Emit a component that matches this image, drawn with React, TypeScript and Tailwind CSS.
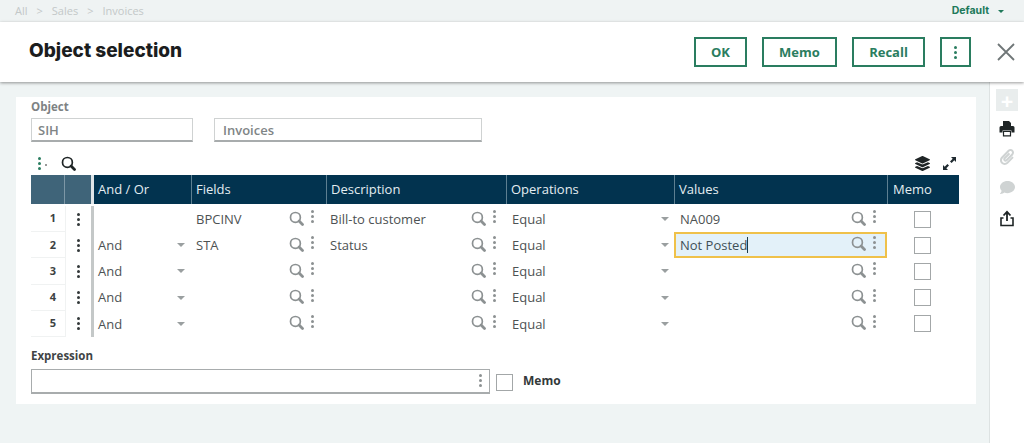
import React from "react";
import { FaPaperclip, FaComment, FaLayerGroup } from "react-icons/fa";

const rows = [
  { n: 1, andOr: "", field: "BPCINV", desc: "Bill-to customer", value: "NA009" },
  { n: 2, andOr: "And", field: "STA", desc: "Status", value: "Not Posted", active: true },
  { n: 3, andOr: "And", field: "", desc: "", value: "" },
  { n: 4, andOr: "And", field: "", desc: "", value: "" },
  { n: 5, andOr: "And", field: "", desc: "", value: "" },
];

function Magnifier({ className = "text-[#8c9192]" }: { className?: string }) {
  return (
    <svg width="15" height="15" viewBox="0 0 14 14" fill="none" className={className}>
      <circle cx="6" cy="6" r="4.6" stroke="currentColor" strokeWidth="1.6" />
      <path d="M9.4 9.4 L12.6 12.6" stroke="currentColor" strokeWidth="2.6" strokeLinecap="round" />
    </svg>
  );
}

function Dots({ className = "bg-[#8c9192]", size = "h-[3px] w-[3px]" }: { className?: string; size?: string }) {
  return (
    <div className="flex flex-col gap-[2px]">
      <span className={`${size} rounded-full ${className}`}></span>
      <span className={`${size} rounded-full ${className}`}></span>
      <span className={`${size} rounded-full ${className}`}></span>
    </div>
  );
}

function Caret() {
  return <span className="h-0 w-0 border-x-[4px] border-t-[4px] border-x-transparent border-t-[#9a9fa0]"></span>;
}

function LookupIcons() {
  return (
    <div className="-mt-[2px] flex items-center gap-[7px]">
      <Magnifier />
      <div className="-mt-[3px]">
        <Dots />
      </div>
    </div>
  );
}

function HeaderCell({ label, width }: { label: string; width: string }) {
  return (
    <div className={`${width} flex h-full items-center border-r border-[#5d7f91] pl-[4px] text-[13px] text-[#e4edf1]`}>
      {label}
    </div>
  );
}

function ActionButton({ label, width }: { label: string; width: string }) {
  return (
    <button className={`${width} flex h-[30px] items-center justify-center border-2 border-[#2a7d60] pt-[1px] text-[13px] font-bold text-[#2a7d60]`}>
      {label}
    </button>
  );
}

function Row({ row }: { row: (typeof rows)[number] }) {
  return (
    <div className="flex h-[26.2px] items-center text-[13px] text-[#4d5253]">
      <div className="flex h-full w-[34px] items-center justify-end border-b border-[#f0f2f2] pr-[9px] text-[11px] font-bold text-[#3c4142]">
        {row.n}
      </div>
      <div className="flex h-full w-[26px] items-center justify-center border-l border-[#f0f2f2]">
        <Dots className="bg-[#33393a]" />
      </div>
      <div className="h-full w-[3px] bg-[#c4c8c8]"></div>
      <div className="flex h-full w-[98px] items-center justify-between pl-[4px] pr-[7px]">
        <span className="mt-[1px]">{row.andOr}</span>
        {row.andOr && <Caret />}
      </div>
      <div className="flex h-full w-[135px] items-center justify-between pl-[4px] pr-[13px]">
        <span className="mt-[1px]">{row.field}</span>
        <LookupIcons />
      </div>
      <div className="flex h-full w-[180px] items-center justify-between pl-[3px] pr-[11px]">
        <span className="mt-[1px]">{row.desc}</span>
        <LookupIcons />
      </div>
      <div className="flex h-full w-[168px] items-center justify-between pl-[5px] pr-[6px]">
        <span className="mt-[1px]">Equal</span>
        <Caret />
      </div>
      {row.active ? (
        <div className="-ml-[1px] -mt-[1px] flex h-[26px] w-[213px] items-center justify-between border-2 border-[#efc14a] bg-[#e3f1f9] pl-[4px] pr-[9px] text-[#3f5058]">
          <span className="mt-[1px] border-r border-[#1d3a4a] leading-[16px]">{row.value}</span>
          <LookupIcons />
        </div>
      ) : (
        <div className="flex h-full w-[212px] items-center justify-between pl-[5px] pr-[11px]">
          <span className="mt-[1px]">{row.value}</span>
          <LookupIcons />
        </div>
      )}
      <div className="flex h-full w-[71px] items-center justify-center">
        <span className="h-[17px] w-[17px] border border-[#a3a7a8] bg-white"></span>
      </div>
    </div>
  );
}

export default function App() {
  return (
    <div className="flex h-[443px] w-[1024px] flex-col overflow-hidden bg-[#eff4f4] font-['Open_Sans',sans-serif]">
      <div className="flex h-[22px] items-center justify-between bg-[#eff3f3] pl-[15px] pr-[20px] text-[11px]">
        <div className="flex items-center gap-[9px] text-[#c3c8c8]">
          <span>All</span>
          <span>&gt;</span>
          <span>Sales</span>
          <span>&gt;</span>
          <span>Invoices</span>
        </div>
        <div className="flex items-center gap-[9px]">
          <span className="font-['Inter',sans-serif] text-[10.5px] font-bold text-[#20795a]">Default</span>
          <span className="h-0 w-0 border-x-[3px] border-t-[3px] border-x-transparent border-t-[#20795a]"></span>
        </div>
      </div>

      <div className="z-10 flex h-[60px] items-center justify-between bg-white pl-[29px] pr-[8px] shadow-[0_1px_3px_rgba(0,0,0,0.4)]">
        <h1 className="-mt-[2px] font-['Inter',sans-serif] text-[19px] font-extrabold text-[#1b1d1e]">Object selection</h1>
        <div className="flex items-center">
          <ActionButton label="OK" width="w-[53px]" />
          <div className="w-[15px]"></div>
          <ActionButton label="Memo" width="w-[75px]" />
          <div className="w-[15px]"></div>
          <ActionButton label="Recall" width="w-[73px]" />
          <div className="w-[15px]"></div>
          <button className="flex h-[30px] w-[31px] items-center justify-center border-2 border-[#2a7d60]">
            <Dots className="bg-[#2a7d60]" />
          </button>
          <svg width="20" height="20" viewBox="0 0 20 20" className="ml-[25px] text-[#6f7677]">
            <path d="M2 2 L18 18 M18 2 L2 18" stroke="currentColor" strokeWidth="1.8" />
          </svg>
        </div>
      </div>

      <div className="flex flex-1">
        <div className="flex-1 pl-[16px] pr-[13px] pt-[15px]">
          <div className="flex h-[307px] flex-col bg-white pl-[15px] pt-[1px]">
            <label className="h-[20px] text-[11.5px] font-bold text-[#7d8283]">Object</label>
            <div className="flex gap-[21px]">
              <div className="flex h-[24px] w-[162px] items-center border border-b-2 border-[#cfd2d2] border-b-[#a8acad] pl-[6px] pt-[2px] text-[13px] font-semibold text-[#808586]">
                SIH
              </div>
              <div className="flex h-[24px] w-[268px] items-center border border-b-2 border-[#cfd2d2] border-b-[#a8acad] pl-[8px] pt-[2px] text-[13px] font-semibold text-[#808586]">
                Invoices
              </div>
            </div>
            <div className="flex h-[33px] w-[928px] items-center justify-between pl-[7px] pr-[2px] pt-[9px]">
              <div className="flex items-center gap-[20px]">
                <div className="relative">
                  <Dots className="bg-[#2a7d60]" />
                  <span className="absolute left-[7px] top-[7px] h-[2px] w-[2px] rounded-full bg-[#777]"></span>
                </div>
                <Magnifier className="text-[#1f2526]" />
              </div>
              <div className="flex items-center gap-[12px]">
                <FaLayerGroup className="text-[15px] text-[#1f2526]" />
                <svg width="15" height="15" viewBox="0 0 15 15" className="text-[#1f2a30]">
                  <path d="M9 1 H14 V6 L12.3 4.3 L9.6 7 L8 5.4 L10.7 2.7 Z M6 14 H1 V9 L2.7 10.7 L5.4 8 L7 9.6 L4.3 12.3 Z" fill="currentColor" />
                </svg>
              </div>
            </div>

            <div className="flex h-[29px] w-[928px] items-center">
              <div className="h-full w-[34px] border-r border-[#7d97a6] bg-[#3f6479]"></div>
              <div className="h-full w-[26px] bg-[#3f6479]"></div>
              <div className="h-full w-[3px] bg-[#dfe5e8]"></div>
              <div className="flex h-full flex-1 items-center bg-[#02334f]">
                <HeaderCell label="And / Or" width="w-[98px]" />
                <HeaderCell label="Fields" width="w-[135px]" />
                <HeaderCell label="Description" width="w-[180px]" />
                <HeaderCell label="Operations" width="w-[168px]" />
                <HeaderCell label="Values" width="w-[213px]" />
                <div className="pl-[5px] text-[13px] text-[#e4edf1]">Memo</div>
              </div>
            </div>

            <div className="w-[928px] pt-[2px]">
              {rows.map((row) => (
                <Row key={row.n} row={row} />
              ))}
            </div>

            <label className="mt-[10px] h-[22px] text-[11.5px] font-bold text-[#3f4445]">Expression</label>
            <div className="flex items-center">
              <div className="flex h-[25px] w-[459px] items-center justify-end border border-b-2 border-[#a8acad] pr-[7px]">
                <Dots />
              </div>
              <span className="ml-[6px] mt-[3px] h-[17px] w-[17px] border border-[#a3a7a8]"></span>
              <span className="ml-[10px] text-[12px] font-bold text-[#33393a]">Memo</span>
            </div>
          </div>
        </div>

        <div className="flex w-[35px] flex-col items-center border-l border-[#dde2e2] bg-white pt-[7px]">
          <div className="flex h-[22px] w-[22px] items-center justify-center bg-[#e9eded] text-[22px] leading-none font-bold text-white">+</div>
          <svg width="16" height="17" viewBox="0 0 16 17" className="mt-[9px] text-[#1f2526]">
            <path d="M4 1 H10 L12 3 V6 H4 Z" fill="currentColor" />
            <path d="M2 6 H14 A1.5 1.5 0 0 1 15.5 7.5 V12.5 H12.5 V10.5 H3.5 V12.5 H0.5 V7.5 A1.5 1.5 0 0 1 2 6 Z" fill="currentColor" />
            <path d="M4.5 11.5 H11.5 V15.8 H4.5 Z" fill="none" stroke="currentColor" strokeWidth="1.2" />
          </svg>
          <FaPaperclip className="mt-[12px] text-[16px] text-[#cfd3d3]" />
          <FaComment className="mt-[15px] text-[15px] text-[#cfd3d3]" />
          <svg width="16" height="17" viewBox="0 0 16 17" fill="none" className="mt-[15px] text-[#1f2526]">
            <path d="M4.5 8 H2 V15.5 H14 V8 H11.5" stroke="currentColor" strokeWidth="1.6" />
            <path d="M8 11 V2.5 M4.5 5.5 L8 1.8 L11.5 5.5" stroke="currentColor" strokeWidth="1.8" />
          </svg>
        </div>
      </div>
    </div>
  );
}
